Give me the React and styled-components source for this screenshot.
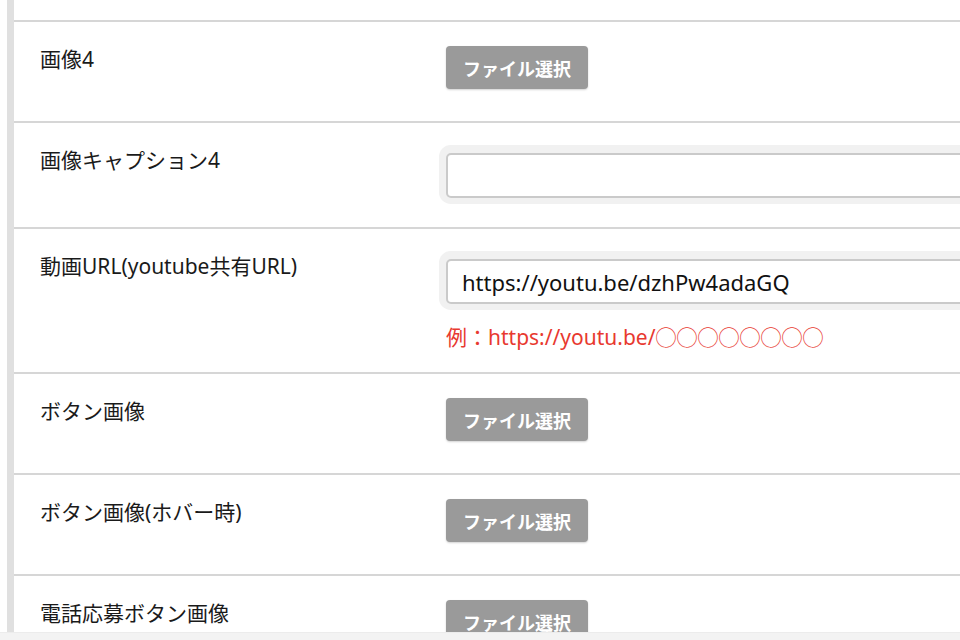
import React from "react";
import styled, { createGlobalStyle } from "styled-components";

const Global = createGlobalStyle`
  html, body { margin: 0; padding: 0; background: #fff; overflow: hidden; }
  body { font-family: "Noto Sans", "Noto Sans CJK JP", sans-serif; color: #222; }
`;

const Page = styled.div`
  width: 960px;
  height: 640px;
  display: flex;
  flex-direction: column;
  overflow: hidden;
  background: #fff;
`;

const Main = styled.div`
  flex: 1;
  min-height: 0;
  display: flex;
  overflow: hidden;
`;

const SideBar = styled.div`
  width: 7px;
  margin-left: 7px;
  background: #e0e0e0;
  flex-shrink: 0;
`;

const Table = styled.div`
  flex: 1;
  min-width: 0;
  display: flex;
  flex-direction: column;
  & > * { flex-shrink: 0; }
`;

const TopTail = styled.div`
  height: 20px;
`;

const Row = styled.div`
  display: grid;
  grid-template-columns: 406px 1fr;
  border-top: 2px solid #d6d6d6;
  padding: 24px 0 ${(p) => p.$pb ?? 32}px 26px;
`;

const Label = styled.div`
  font-size: 21px;
  line-height: 1.3;
  color: #1a1a1a;
  white-space: nowrap;
`;

const Field = styled.div`
  display: flex;
  flex-direction: column;
  align-items: flex-start;
  min-width: 0;
`;

const FileButton = styled.button`
  height: 43px;
  padding: 0 17px;
  border: none;
  border-radius: 4px;
  background: #9a9a9a;
  color: #fff;
  font-family: "Noto Sans CJK JP", sans-serif;
  font-weight: 700;
  font-size: 18px;
  box-shadow: 0 1px 2px rgba(0, 0, 0, 0.18);
  cursor: pointer;
`;

const TextInput = styled.input`
  box-sizing: border-box;
  margin-top: 6px;
  width: 620px;
  height: 45px;
  padding: 0 12px 0 14px;
  border: 2px solid #cacaca;
  border-radius: 5px;
  box-shadow: 0 -1px 0 7px #f1f1f1;
  font-family: "Noto Sans", "Noto Sans CJK JP", sans-serif;
  font-size: 22px;
  color: #111;
  background: #fff;
  outline: none;
`;

const Note = styled.div`
  margin-top: 20px;
  font-size: 21px;
  line-height: 1.3;
  color: #e8392f;
  white-space: nowrap;
`;

const BottomStrip = styled.div`
  height: 7px;
  background: #f3f3f3;
  border-top: 1px solid #ececec;
  flex-shrink: 0;
`;

export default function App() {
  return (
    <>
      <Global />
      <Page>
        <Main>
          <SideBar />
          <Table>
            <TopTail />
            <Row>
              <Label>画像4</Label>
              <Field>
                <FileButton>ファイル選択</FileButton>
              </Field>
            </Row>
            <Row $pb={29}>
              <Label>画像キャプション4</Label>
              <Field>
                <TextInput defaultValue="" />
              </Field>
            </Row>
            <Row $pb={21}>
              <Label>動画URL(youtube共有URL)</Label>
              <Field>
                <TextInput defaultValue="https://youtu.be/dzhPw4adaGQ" />
                <Note>例：https://youtu.be/◯◯◯◯◯◯◯◯</Note>
              </Field>
            </Row>
            <Row>
              <Label>ボタン画像</Label>
              <Field>
                <FileButton>ファイル選択</FileButton>
              </Field>
            </Row>
            <Row>
              <Label>ボタン画像(ホバー時)</Label>
              <Field>
                <FileButton>ファイル選択</FileButton>
              </Field>
            </Row>
            <Row>
              <Label>電話応募ボタン画像</Label>
              <Field>
                <FileButton>ファイル選択</FileButton>
              </Field>
            </Row>
          </Table>
        </Main>
        <BottomStrip />
      </Page>
    </>
  );
}
